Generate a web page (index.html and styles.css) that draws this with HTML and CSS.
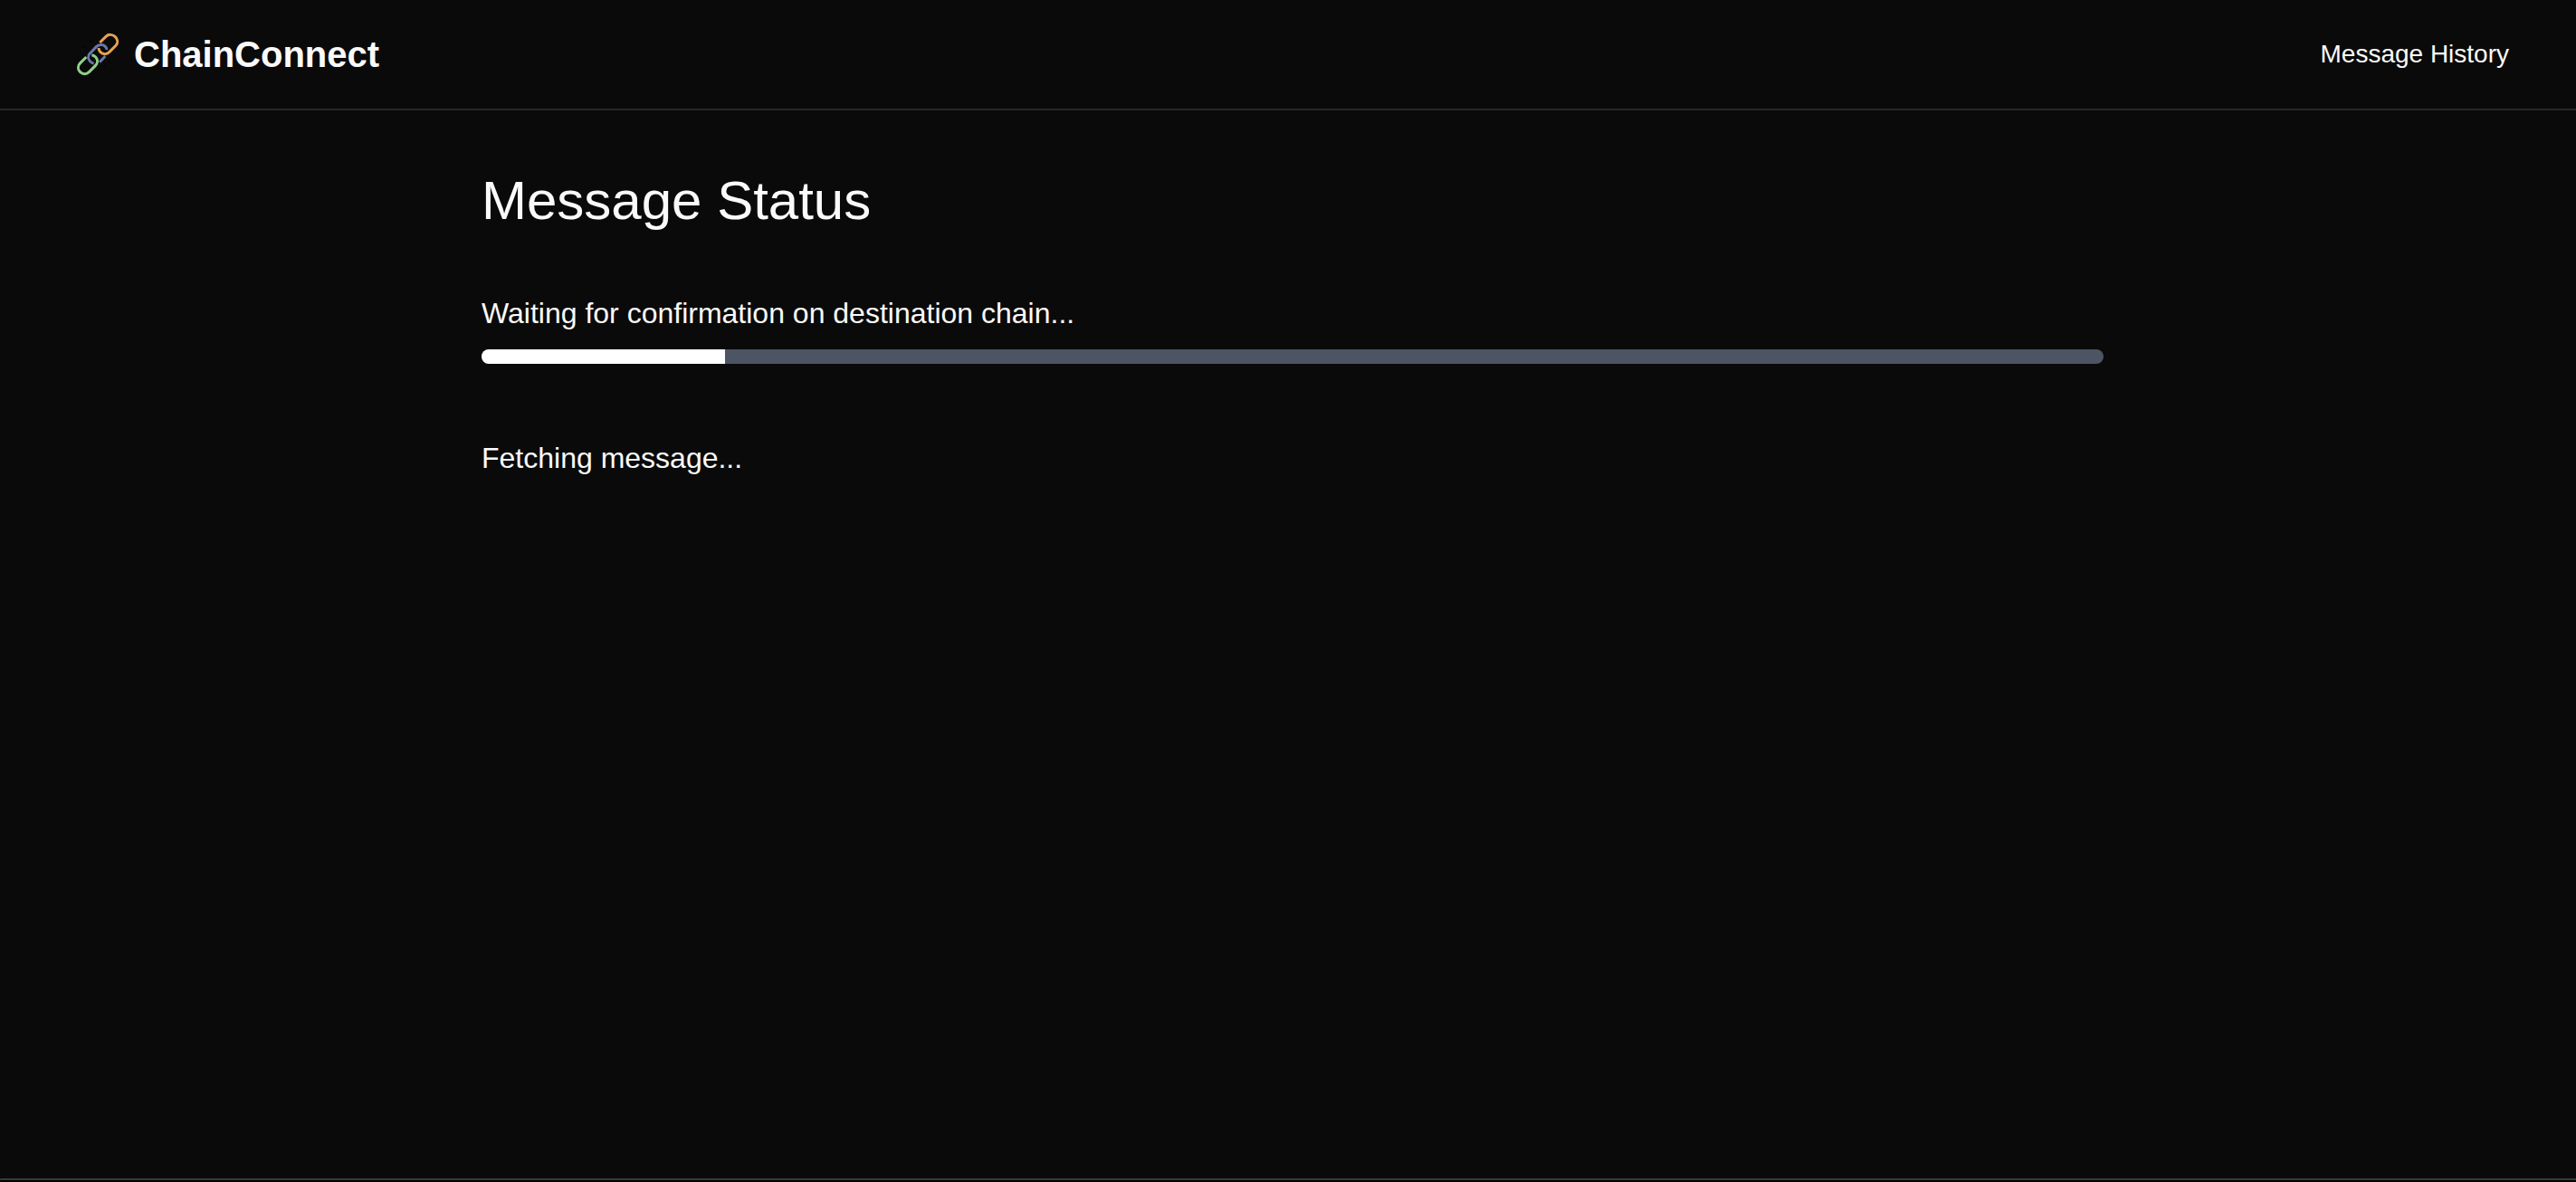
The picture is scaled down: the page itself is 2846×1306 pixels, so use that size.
FILE: index.html
```html
<!DOCTYPE html>
<html lang="en">
<head>
  <meta charset="utf-8">
  <meta name="viewport" content="width=device-width, initial-scale=1">
  <title>ChainConnect</title>
  <link rel="stylesheet" href="styles.css">
</head>
<body>
  <header class="header">
    <a class="brand" href="#">
      <svg class="brand-icon" viewBox="42 48 144 144" fill="none" stroke-width="9" aria-hidden="true">
        <path stroke="#000" stroke-width="3" d="M89 72L93 80M67 94L76 99M137 157L141 166M151 143L160 147"/>
        <path stroke="#e5a352" d="M121 81L141 61C149 53 163 53 172 62C181 71 181 83 174 91L152 113C144 121 131 121 123 113C119 109 117 104 117 99"/>
        <path stroke="#6b76ae" d="M101 150C97 150 93 148 89 144C81 136 81 124 89 116L109 95C117 87 131 86 139 94C142 97 144 101 144 105M139 126L120 146"/>
        <path stroke="#8fd08a" d="M76 129L56 149C47 158 47 170 56 179C64 187 77 187 85 179L106 158C114 150 115 138 107 129C104 126 99 123 94 123"/>
      </svg>
      <span>ChainConnect</span>
    </a>
    <nav><a class="nav-link" href="#">Message History</a></nav>
  </header>
  <main class="main">
    <div class="content">
      <h1 class="title">Message Status</h1>
      <label class="text" for="confirmation">Waiting for confirmation on destination chain...</label>
      <progress class="progress" id="confirmation" max="100" value="15"></progress>
      <p class="text">Fetching message...</p>
    </div>
  </main>
  <footer class="window-edge"></footer>
</body>
</html>
```
FILE: styles.css
```css
* {
  box-sizing: border-box;
}

body {
  display: flex;
  flex-direction: column;
  min-height: 100vh;
  margin: 0;
  background: #0a0a0a;
  color: #fafafa;
  font-family: "Liberation Sans", Arial, sans-serif;
}

a {
  color: inherit;
  text-decoration: none;
}

.header {
  display: flex;
  align-items: center;
  justify-content: space-between;
  padding: 32px 74px 32px 84px;
  border-bottom: 2px solid #272727;
}

.brand {
  display: flex;
  align-items: center;
  gap: 16px;
  font-size: 40px;
  font-weight: 700;
  line-height: 56px;
}

.brand-icon {
  width: 48px;
  height: 48px;
}

.nav-link {
  font-size: 28px;
  line-height: 40px;
}

.main {
  flex: 1;
  padding: 64px 0 64px 10px;
}

.content {
  display: flex;
  flex-direction: column;
  max-width: 1792px;
  margin: 0 auto;
}

.title {
  margin: 0 0 64px;
  font-size: 60px;
  font-weight: 400;
  line-height: 72px;
}

.text {
  margin: 0;
  font-size: 32px;
  line-height: 48px;
}

.progress {
  width: 100%;
  height: 16px;
  margin: 16px 0 80px;
  overflow: hidden;
  appearance: none;
  border: 0;
  border-radius: 8px;
  background: #4d5564;
}

.progress::-webkit-progress-bar {
  background: #4d5564;
}

.progress::-webkit-progress-value {
  background: #fff;
}

.progress::-moz-progress-bar {
  background: #fff;
}

.window-edge {
  height: 4px;
  border-top: 2px solid #3a3a3a;
  border-bottom-left-radius: 4px;
  background: #000;
}
```
